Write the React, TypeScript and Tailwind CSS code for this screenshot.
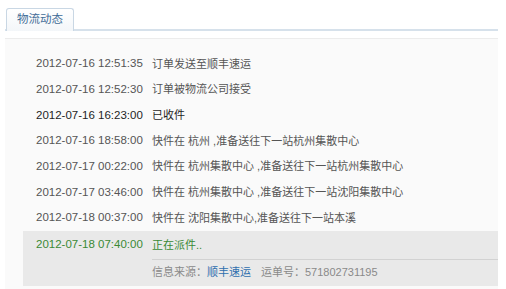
const rows = [
    {time: "2012-07-16 12:51:35", text: "订单发送至顺丰速运"},
    {time: "2012-07-16 12:52:30", text: "订单被物流公司接受"},
    {time: "2012-07-16 16:23:00", text: "已收件", dark: true},
    {time: "2012-07-16 18:58:00", text: "快件在 杭州 ,准备送往下一站杭州集散中心"},
    {time: "2012-07-17 00:22:00", text: "快件在 杭州集散中心 ,准备送往下一站杭州集散中心"},
    {time: "2012-07-17 03:46:00", text: "快件在 杭州集散中心 ,准备送往下一站沈阳集散中心"},
    {time: "2012-07-18 00:37:00", text: "快件在 沈阳集散中心,准备送往下一站本溪"},
]

export default function App() {
    return (
        <div className="w-[506px] h-[289px] bg-white overflow-hidden pl-[5px] text-[11.5px]"
             style={{fontFamily: '"Liberation Sans", Arial, "Noto Sans CJK SC", sans-serif'}}>
            <div className="w-[493px] pt-[8px] h-[31px] border-b-2 border-[#d6e1eb] flex">
                <div className="ml-[1px] w-[68px] h-[23px] border border-b-0 border-[#c9d7e4] rounded-t-[3px] bg-gradient-to-b from-white to-[#f3f6f9] text-[#3f6b96] flex items-center justify-center">
                    物流动态
                </div>
            </div>
            <div className="mt-[7px] w-[493px] h-[260px] bg-[#fafafa] border-t border-[#ececec] pt-[12px]">
                <div className="pl-[31px]">
                    {rows.map((row) => (
                        <div key={row.time} className={"h-[25.7px] flex items-center " + (row.dark ? "text-[#1e1e1e]" : "text-[#555]")}>
                            <span className="w-[116px] shrink-0">{row.time}</span>
                            <span className="text-[11px]">{row.text}</span>
                        </div>
                    ))}
                </div>
                <div className="ml-[18px] bg-[#e9e9e9] h-[55px]">
                    <div className="h-[28px] pl-[13px] flex items-center text-[#3a8a35]">
                        <span className="w-[116px] shrink-0">2012-07-18 07:40:00</span>
                        <span className="text-[11px]">正在派件..</span>
                    </div>
                    <div className="ml-[129px] h-[25px] border-t border-[#d2d2d2] flex items-center text-[#8a8a8a] text-[11px]">
                        <span>信息来源：</span>
                        <span className="text-[#2f6fae]">顺丰速运</span>
                        <span className="ml-[10px]">运单号：571802731195</span>
                    </div>
                </div>
            </div>
        </div>
    )
}
